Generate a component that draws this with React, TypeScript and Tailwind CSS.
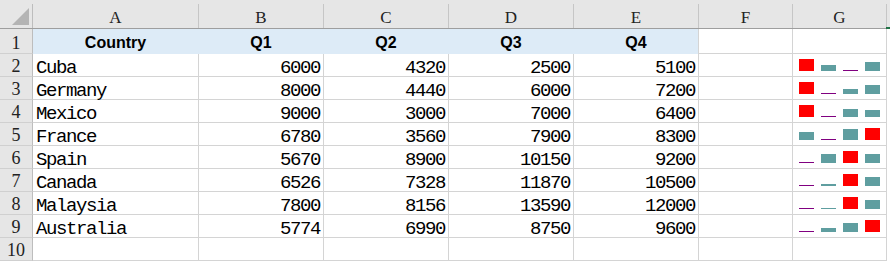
import React from "react";

const rows: [string, number, number, number, number][] = [
  ["Cuba", 6000, 4320, 2500, 5100],
  ["Germany", 8000, 4440, 6000, 7200],
  ["Mexico", 9000, 3000, 7000, 6400],
  ["France", 6780, 3560, 7900, 8300],
  ["Spain", 5670, 8900, 10150, 9200],
  ["Canada", 6526, 7328, 11870, 10500],
  ["Malaysia", 7800, 8156, 13590, 12000],
  ["Australia", 5774, 6990, 8750, 9600],
];

const serif = { fontFamily: '"Liberation Serif", "DejaVu Serif", serif' };
const mono = { fontFamily: '"Liberation Mono", "DejaVu Sans Mono", monospace' };
const sans = { fontFamily: '"Liberation Sans", Arial, sans-serif' };

function Spark({ vals }: { vals: number[] }) {
  const mn = Math.min(...vals);
  const mx = Math.max(...vals);
  return (
    <div className="flex items-end gap-[7px] h-[12px] ml-[6px]">
      {vals.map((v, i) => {
        const h = Math.max(1, Math.round(((v - mn) / (mx - mn)) * 12));
        const color = v === mx ? "#ff0000" : v === mn ? "#800080" : "#5f9ea0";
        return <div key={i} className="w-[15px]" style={{ height: h, background: color }} />;
      })}
    </div>
  );
}

function RowNum({ n, tall }: { n: number; tall?: boolean }) {
  return (
    <div
      className={`w-[33px] ${tall ? "h-[25px]" : "h-[23px]"} shrink-0 bg-[#e6e6e6] border-r border-b border-r-[#bdbdbd] border-b-[#d0d0d0] flex items-end justify-center text-[18px] leading-[20px] text-[#222]`}
      style={serif}
    >
      {n}
    </div>
  );
}

export default function App() {
  const letters = ["A", "B", "C", "D", "E", "F", "G"];
  const widths = ["w-[166px]", "w-[125px]", "w-[125px]", "w-[125px]", "w-[125px]", "w-[94px]", "w-[94px]"];
  return (
    <div className="w-[890px] h-[261px] bg-white overflow-hidden relative">
      {/* column header */}
      <div className="bg-[#e6e6e6] h-[29px] flex flex-col">
        <div className="h-[4px]" />
        <div className="flex h-[25px] border-b border-[#9e9e9e]">
          <div className="w-[33px] h-[24px] border-r border-[#bdbdbd] relative">
            <svg className="absolute left-0 top-[-4px]" width="32" height="28" viewBox="0 0 32 28">
              <polygon points="12,25 29,25 29,8" fill="#b4b4b4" />
            </svg>
          </div>
          {letters.map((l, i) => (
            <div
              key={l}
              className={`${widths[i]} h-[24px] border-r border-[#c6c6c6] flex items-end justify-center text-[17px] leading-[20px] text-[#222]`}
              style={serif}
            >
              {l}
            </div>
          ))}
          <div className="flex-1" />
        </div>
      </div>
      <div className="absolute right-0 top-[27px] w-[4px] h-[2px] bg-[#217346]" />

      {/* row 1 */}
      <div className="flex">
        <RowNum n={1} tall />
        {["Country", "Q1", "Q2", "Q3", "Q4"].map((t, i) => (
          <div
            key={t}
            className={`${widths[i]} h-[25px] bg-[#ddebf7] border-r ${i === 4 ? "border-[#d4d4d4]" : "border-[#ddebf7]"} flex items-end justify-center font-bold text-[16px] leading-[20px] text-black pb-[1px]`}
            style={sans}
          >
            {t}
          </div>
        ))}
        <div className="w-[94px] h-[25px] border-r border-b border-[#d4d4d4]" />
        <div className="w-[94px] h-[25px] border-r border-b border-[#d4d4d4]" />
      </div>

      {rows.map((r, ri) => (
        <div key={r[0]} className="flex">
          <RowNum n={ri + 2} />
          <div
            className="w-[166px] h-[23px] border-r border-b border-[#d4d4d4] flex items-end pl-[3px] text-[19px] leading-[16px] tracking-[-1.4px] text-black"
            style={mono}
          >
            {r[0]}
          </div>
          {[r[1], r[2], r[3], r[4]].map((v, i) => (
            <div
              key={i}
              className="w-[125px] h-[23px] border-r border-b border-[#d4d4d4] flex items-end justify-end pr-[3px] text-[19px] leading-[16px] tracking-[-1.4px] text-black"
              style={mono}
            >
              {v}
            </div>
          ))}
          <div className="w-[94px] h-[23px] border-r border-b border-[#d4d4d4]" />
          <div className="w-[94px] h-[23px] border-r border-b border-[#d4d4d4] pt-[5px]">
            <Spark vals={[r[1], r[2], r[3], r[4]]} />
          </div>
        </div>
      ))}

      {/* row 10 */}
      <div className="flex">
        <RowNum n={10} />
        {widths.map((w, i) => (
          <div key={i} className={`${w} h-[23px] border-r border-b border-[#d4d4d4]`} />
        ))}
      </div>
    </div>
  );
}
